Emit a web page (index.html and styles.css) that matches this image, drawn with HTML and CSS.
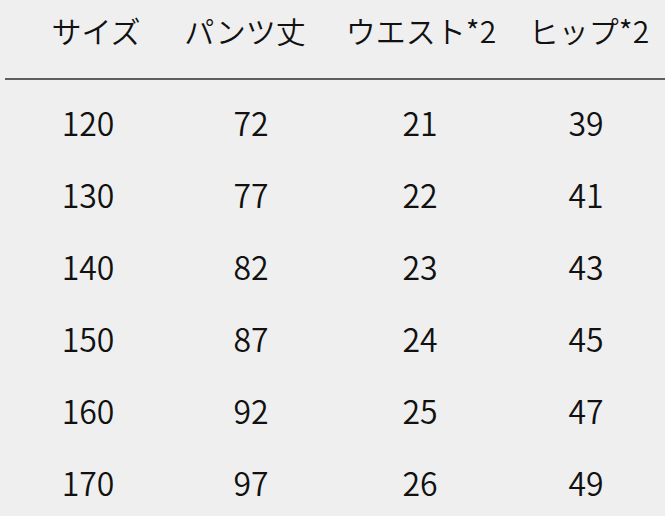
FILE: index.html
```html
<!DOCTYPE html>
<html lang="ja">
<head>
<meta charset="utf-8">
<link rel="stylesheet" href="styles.css">
</head>
<body>
<div class="size-table">
  <div class="row head">
    <div class="cell h-size">サイズ</div>
    <div class="cell h-length">パンツ丈</div>
    <div class="cell h-waist">ウエスト*2</div>
    <div class="cell h-hip">ヒップ*2</div>
  </div>
  <div class="body">
    <div class="row"><div class="cell">120</div><div class="cell">72</div><div class="cell">21</div><div class="cell">39</div></div>
    <div class="row"><div class="cell">130</div><div class="cell">77</div><div class="cell">22</div><div class="cell">41</div></div>
    <div class="row"><div class="cell">140</div><div class="cell">82</div><div class="cell">23</div><div class="cell">43</div></div>
    <div class="row"><div class="cell">150</div><div class="cell">87</div><div class="cell">24</div><div class="cell">45</div></div>
    <div class="row"><div class="cell">160</div><div class="cell">92</div><div class="cell">25</div><div class="cell">47</div></div>
    <div class="row"><div class="cell">170</div><div class="cell">97</div><div class="cell">26</div><div class="cell">49</div></div>
  </div>
</div>
</body>
</html>
```

FILE: styles.css
```css
html, body {
  margin: 0;
  padding: 0;
  background: #efefef;
  overflow: hidden;
}
body {
  width: 665px;
  height: 516px;
  font-family: "Noto Sans CJK JP", "Noto Sans", sans-serif;
  font-weight: 350;
  color: #111;
}
.size-table {
  width: 664px;
  margin-left: 5px;
}
.row {
  display: grid;
  grid-template-columns: repeat(4, 1fr);
  align-items: center;
  height: 72px;
}
.cell {
  text-align: center;
  font-size: 32px;
  line-height: 1;
}
.body .cell:nth-child(2) {
  padding-right: 6px;
}
.head {
  align-items: start;
  padding-top: 15px;
  box-sizing: border-box;
  border-bottom: 2px solid #5e5e5e;
  height: 80px;
}
.head .cell {
  font-size: 30px;
}
.h-size { padding-left: 16px; }
.h-length { padding-right: 18px; }
.h-waist { padding-left: 2px; }
.h-hip { padding-left: 6px; }
.body {
  padding-top: 6px;
}
```
